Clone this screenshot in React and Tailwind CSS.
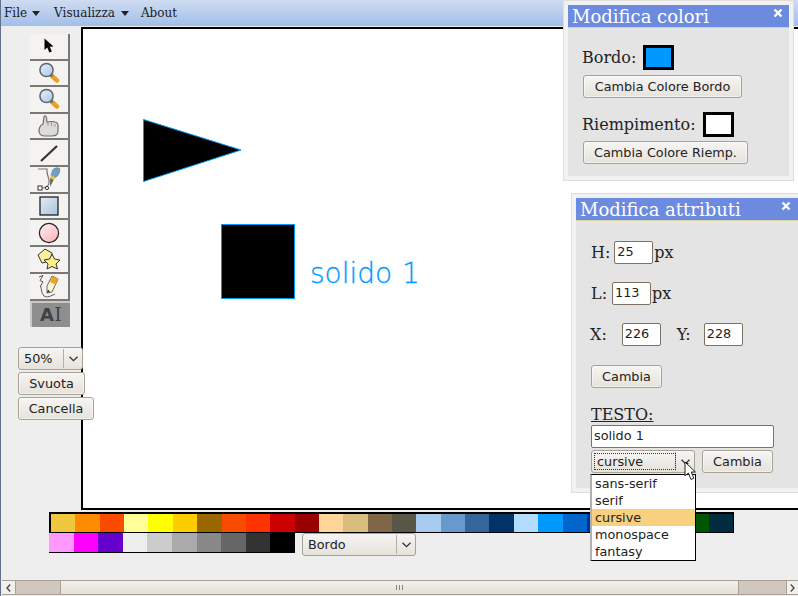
import React from "react";

const sans = "font-['DejaVu_Sans',sans-serif]";
const serif = "font-['DejaVu_Serif',serif]";

const row1 = ["#f0c840","#ff8c00","#f94c00","#ffff99","#ffff00","#ffcc00","#996600","#f94c00","#ff3300","#cc0000","#990000","#ffd699","#d9bd7f","#7f6647","#595747","#a8cbef","#6699cc","#336699","#003366","#b3dcff","#0099ff","#0066cc","#003399","#99cc99","#339933","#006600","#005500","#002b40"];
const row2 = ["#ff99ff","#ff00ff","#6600cc","#eeeeee","#cccccc","#aaaaaa","#888888","#666666","#333333","#000000"];

function Chevron({ className = "" }) {
  return (
    <svg width="9" height="6" viewBox="0 0 9 6" className={className}>
      <path d="M0.5 0.8 L4.5 4.6 L8.5 0.8" fill="none" stroke="#2e3436" strokeWidth="1.3" />
    </svg>
  );
}

function Btn({ children, className = "" }) {
  return (
    <button className={`h-[23px] pt-px rounded-[3px] border border-[#a8a295] bg-gradient-to-b from-[#f6f5f3] to-[#e6e2dc] text-[12.8px] leading-none text-[#222] text-center shadow-[inset_0_0_0_1px_rgba(255,255,255,0.5)] ${sans} ${className}`}>
      {children}
    </button>
  );
}

function Select({ label, className = "", arrow = "w-[19px]" }) {
  return (
    <div className={`h-[23px] rounded-[3px] border border-[#a8a295] bg-gradient-to-b from-[#f6f5f3] to-[#e6e2dc] flex items-center text-[12.8px] text-[#222] ${sans} ${className}`}>
      <span className="flex-1 pl-[5px] pt-px leading-none">{label}</span>
      <span className={`${arrow} h-[19px] border-l border-[#b5b0a6] flex items-center justify-center`}>
        <Chevron />
      </span>
    </div>
  );
}

function Field({ value, className = "" }) {
  return (
    <div className={`h-[23px] rounded-[2px] border border-[#7d7163] bg-white flex items-center pl-[2px] text-[12.8px] leading-none text-[#222] ${sans} ${className}`}>
      {value}
    </div>
  );
}

function Tool({ children, active }) {
  return (
    <div
      className={
        active
          ? "flex-1 bg-[#8e8e8e] border-l-2 border-t-2 border-[#c9c9c9] flex items-center justify-center"
          : "flex-1 bg-[#f4f3f2] border-r-2 border-b-2 border-[#7b7772] flex items-center justify-center"
      }
    >
      {children}
    </div>
  );
}

function Lens() {
  return (
    <svg width="22" height="22" viewBox="0 0 22 22">
      <defs>
        <linearGradient id="lensg" x1="0" y1="0" x2="1" y2="1">
          <stop offset="0" stopColor="#e8f1fb" />
          <stop offset="1" stopColor="#a9c6e6" />
        </linearGradient>
      </defs>
      <path d="M14 14 L19 18.5" stroke="#eba021" strokeWidth="4.4" strokeLinecap="round" />
      <path d="M12.6 12.6 L14.6 14.4" stroke="#777" strokeWidth="3" />
      <circle cx="8.5" cy="8" r="6.6" fill="url(#lensg)" stroke="#5d656e" strokeWidth="1.5" />
    </svg>
  );
}

function Tools() {
  return (
    <div className="w-[40px] h-[293px] flex flex-col">
      <Tool>
        <svg width="12" height="16" viewBox="0 0 12 16">
          <path d="M1.5 0.5 L1.5 12 L4.3 9.6 L6.3 14.6 L8.8 13.4 L6.8 8.8 L10.5 8.6 Z" fill="#000" />
        </svg>
      </Tool>
      <Tool><Lens /></Tool>
      <Tool><Lens /></Tool>
      <Tool>
        <svg width="22" height="24" viewBox="0 0 22 24">
          <path d="M6 3 C7 1 8.5 2 8.5 4 L9 8 L13 7.5 C16 7.5 20 8.5 20 11 L20 17 C20 20 18 22 14 22 L7 22 C3 22 1 20 1 17 C1 13 3 11 5 10 Z" fill="#dcdcd6" stroke="#6f716b" strokeWidth="1.2" />
          <path d="M10 9 L10 12 M13.5 9 L13.5 12 M17 10 L17 12.5" stroke="#9a9a94" strokeWidth="1" />
        </svg>
      </Tool>
      <Tool>
        <svg width="20" height="20" viewBox="0 0 20 20">
          <path d="M2 18 L18 3" stroke="#333" strokeWidth="2.2" />
        </svg>
      </Tool>
      <Tool>
        <svg width="24" height="25" viewBox="0 0 24 25">
          <path d="M1 2 L10 2 C9 8 13 11 12 16 C11.5 20 9 21 4 21" fill="none" stroke="#777" strokeWidth="1.2" />
          <rect x="1" y="19" width="4" height="4" fill="#fff" stroke="#333" />
          <circle cx="10" cy="21" r="1.6" fill="#fff" stroke="#333" />
          <path d="M15 5 C16 1 20 0 22.5 1.5 C23.5 4 21.5 9 18.5 10.5 L14 8.5 Z" fill="#6fa0c6" stroke="#4e6f8d" strokeWidth="0.6" />
          <path d="M14 8 L18.5 10.5 L17 13 L13 11 Z" fill="#f0c232" />
          <path d="M13.2 11 L16.6 13 L13 20 Z" fill="#666" />
        </svg>
      </Tool>
      <Tool>
        <svg width="20" height="20" viewBox="0 0 20 20">
          <defs>
            <linearGradient id="rectg" x1="0" y1="0" x2="1" y2="1">
              <stop offset="0" stopColor="#e4ecf4" />
              <stop offset="1" stopColor="#a8c3dc" />
            </linearGradient>
          </defs>
          <rect x="1" y="1" width="18" height="18" fill="url(#rectg)" stroke="#111" strokeWidth="1.2" />
        </svg>
      </Tool>
      <Tool>
        <svg width="22" height="22" viewBox="0 0 22 22">
          <defs>
            <linearGradient id="circg" x1="0" y1="0" x2="0.7" y2="1">
              <stop offset="0" stopColor="#fff3f4" />
              <stop offset="1" stopColor="#fdb6bd" />
            </linearGradient>
          </defs>
          <circle cx="11" cy="11" r="9.6" fill="url(#circg)" stroke="#222" strokeWidth="1.2" />
        </svg>
      </Tool>
      <Tool>
        <svg width="25" height="24" viewBox="0 0 25 24">
          <path d="M1 8 L8 2 L15 6 L14 14 L5 16 Z" fill="#fdf0a0" stroke="#333" strokeWidth="1" />
          <path d="M15 7 L17.5 12 L23 13 L19 17 L20.5 22 L15 19.5 L10 22 L11 17 L7 13 L12.5 12 Z" fill="#fcee88" stroke="#333" strokeWidth="1" />
        </svg>
      </Tool>
      <Tool>
        <svg width="24" height="25" viewBox="0 0 24 25">
          <path d="M2 3 L6 1.5 L3 6.5 L6 8 L3.5 12 C5 16 4 19 7 22 C10 24 14 22 18 20" fill="none" stroke="#555" strokeWidth="1" />
          <path d="M15 2 L21 5 L15 18 L10 19 L10 12 Z" fill="#fff6cf" stroke="#444" strokeWidth="0.8" />
          <path d="M15.5 2.5 L21 5 L18.5 10.5 L13 8 Z" fill="#f0a41c" />
          <path d="M10 19 L11 15.5 L13 17.5 Z" fill="#333" />
        </svg>
      </Tool>
      <Tool active>
        <span className={`text-[18px] font-bold leading-none text-[#3c4246] tracking-[0.5px] ${sans}`}>
          A<span className={`font-normal ${serif}`}>I</span>
        </span>
      </Tool>
    </div>
  );
}

function Panel({ title, className = "", children, closeOffset = "right-[4px]" }) {
  return (
    <div className={`absolute z-20 border border-[#dedede] bg-[#f2f2f2] p-[4px] ${className}`}>
      <div className="bg-[#e4e4e4] h-full">
        <div className={`relative h-[23px] bg-[#6c8bdf] border-b border-[#d8d4a8] pl-[4px] text-white text-[18px] leading-[24px] ${serif}`}>
          {title}
          <span className={`absolute ${closeOffset} top-[3px]`}>
            <svg width="10" height="10" viewBox="0 0 10 10">
              <path d="M1.5 1.5 L8.5 8.5 M8.5 1.5 L1.5 8.5" stroke="#fff" strokeWidth="2.4" />
            </svg>
          </span>
        </div>
        {children}
      </div>
    </div>
  );
}

function Swatch({ color }) {
  return <span className="w-[31px] h-[25px] border-[3px] border-black shrink-0" style={{ background: color }} />;
}

function Label({ children, className = "" }) {
  return <span className={`text-[16px] leading-none text-[#222] ${serif} ${className}`}>{children}</span>;
}

export default function App() {
  return (
    <div className="relative w-[798px] h-[596px] overflow-hidden bg-[#eeeeee] flex flex-col border-l border-l-[#64708a]">
      {/* menu */}
      <div className={`h-[26px] shrink-0 bg-gradient-to-b from-[#cfdcf1] to-[#a2bfe9] flex items-center text-[12px] text-[#1c1c1c] ${serif}`}>
        <span className="ml-[3px]">File</span>
        <svg width="8" height="5" viewBox="0 0 8 5" className="ml-[5px]"><path d="M0 0 H8 L4 5 Z" fill="#222" /></svg>
        <span className="ml-[14px]">Visualizza</span>
        <svg width="8" height="5" viewBox="0 0 8 5" className="ml-[6px]"><path d="M0 0 H8 L4 5 Z" fill="#222" /></svg>
        <span className="ml-[12px]">About</span>
      </div>

      {/* work area */}
      <div className="mt-[1px] flex h-[483px] shrink-0">
        <div className="relative z-10 w-[80px] shrink-0 pl-[17px] pt-[7px]">
          <div className="pl-[12px]"><Tools /></div>
          <div className="mt-[20px] flex flex-col items-start gap-[2px]">
            <Select label="50%" className="w-[65px]" />
            <Btn className="w-[67px]">Svuota</Btn>
            <Btn className="w-[76px]">Cancella</Btn>
          </div>
        </div>
        <div className="relative flex-1 border-2 border-black bg-white -mr-[6px]">
          <svg width="716" height="479" className="absolute left-0 top-0">
            <polygon points="60.5,90.5 158,121 60.5,152.5" fill="#000" stroke="#0099ff" strokeWidth="1" />
            <rect x="138.5" y="195.5" width="73" height="74" fill="#000" stroke="#0099ff" strokeWidth="1" />
            <text x="227" y="254" fill="#0099ff" stroke="#0099ff" strokeWidth="0.3" fontSize="28" fontWeight="200" wordSpacing="1" fontFamily="'DejaVu Sans', sans-serif">solido 1</text>
          </svg>
        </div>
      </div>

      {/* palette */}
      <div className="relative ml-[48px] mt-[2px]">
        <div className="w-[685px] h-[21px] border-2 border-b border-r border-black flex">
          {row1.map((c, i) => <span key={i} className="flex-1" style={{ background: c }} />)}
        </div>
        <div className="flex items-start">
          <div className="w-[246px] h-[20px] border-b border-black flex">
            {row2.map((c, i) => <span key={i} className="flex-1" style={{ background: c }} />)}
          </div>
          <Select label="Bordo" className="ml-[7px] w-[114px]" arrow="w-[19px]" />
        </div>
      </div>

      {/* scrollbar */}
      <div className="mt-[24px] ml-[1px] h-[15px] shrink-0 flex items-stretch border-y border-[#a89f96] bg-[#d0c8be]">
        <div className="w-[14px] bg-[#f2f0ec] border-r border-[#a89f96] flex items-center justify-center">
          <svg width="5" height="8" viewBox="0 0 5 8"><path d="M4.2 0.5 L1 4 L4.2 7.5" fill="none" stroke="#444" strokeWidth="1.3" /></svg>
        </div>
        <div className="w-[44px]" />
        <div className="w-[679px] bg-gradient-to-b from-[#f2f0ec] to-[#e4dfd8] border-x border-[#a89f96] flex items-center justify-center gap-[2px]">
          <span className="w-px h-[5px] bg-[#8d857c]" />
          <span className="w-px h-[5px] bg-[#8d857c]" />
          <span className="w-px h-[5px] bg-[#8d857c]" />
        </div>
        <div className="flex-1" />
        <div className="w-[12px] bg-[#f2f0ec] border-l border-[#a89f96] flex items-center justify-center">
          <svg width="5" height="8" viewBox="0 0 5 8"><path d="M0.8 0.5 L4 4 L0.8 7.5" fill="none" stroke="#444" strokeWidth="1.3" /></svg>
        </div>
      </div>

      {/* colour panel */}
      <Panel title="Modifica colori" className="left-[562px] top-0 w-[231px] h-[181px]" closeOffset="right-[6px]">
        <div className="pl-[14px] pt-[17px] flex flex-col items-start">
          <div className="flex items-center gap-[7px] h-[25px]"><Label>Bordo:</Label><Swatch color="#0099ff" /></div>
          <Btn className="mt-[5px] ml-px w-[159px]">Cambia Colore Bordo</Btn>
          <div className="mt-[14px] flex items-center gap-[7px] h-[25px]"><Label>Riempimento:</Label><Swatch color="#ffffff" /></div>
          <Btn className="mt-[4px] ml-px w-[165px]">Cambia Colore Riemp.</Btn>
        </div>
      </Panel>

      {/* attributes panel */}
      <Panel title="Modifica attributi" className="left-[570px] top-[193px] w-[240px] h-[300px]" closeOffset="right-[15px]">
        <div className="pl-[14px] pt-[20px] flex flex-col items-start">
          <div className="flex items-center h-[23px]">
            <Label className="ml-px">H:</Label>
            <Field value="25" className="ml-[4px] w-[39px]" />
            <Label className="ml-px">px</Label>
          </div>
          <div className="flex items-center h-[23px] mt-[18px]">
            <Label className="ml-px">L:</Label>
            <Field value="113" className="ml-[5px] w-[39px]" />
            <Label className="ml-px">px</Label>
          </div>
          <div className="flex items-center h-[23px] mt-[18px]">
            <Label>X:</Label>
            <Field value="226" className="ml-[15px] w-[39px]" />
            <Label className="ml-[16px]">Y:</Label>
            <Field value="228" className="ml-[13px] w-[39px]" />
          </div>
          <Btn className="mt-[19px] ml-px w-[71px]">Cambia</Btn>
          <Label className="mt-[19px] ml-px underline">TESTO:</Label>
          <Field value="solido 1" className="mt-[2px] ml-px w-[183px]" />
          <div className="mt-[2px] ml-px flex gap-[7px]">
            <div className="relative">
              <Select label="cursive" className="w-[104px]" />
              <span className="absolute left-[3px] top-[3px] w-[82px] h-[17px] border border-dotted border-[#333]" />
            </div>
            <Btn className="w-[71px]">Cambia</Btn>
          </div>
        </div>
      </Panel>

      {/* dropdown */}
      <div className={`absolute z-30 left-[589px] top-[474px] w-[106px] h-[87px] bg-white border border-black border-l-[2px] border-l-[#b0b0b0] text-[12.8px] leading-[17px] text-[#222] ${sans}`}>
        <div className="pl-[3px]">sans-serif</div>
        <div className="pl-[3px]">serif</div>
        <div className="pl-[3px] bg-[#f9cf80]">cursive</div>
        <div className="pl-[3px]">monospace</div>
        <div className="pl-[3px]">fantasy</div>
      </div>

      {/* pointer */}
      <svg width="13" height="20" viewBox="0 0 13 20" className="absolute z-40 left-[683px] top-[461px]">
        <path d="M1 1 L1 15 L4.4 12 L7 18.5 L9.8 17.3 L7.2 11 L11.5 11 Z" fill="#fff" stroke="#222" strokeWidth="1" />
        <path d="M2 1 L2 3 L5 3 Z" fill="#111" />
      </svg>
    </div>
  );
}
